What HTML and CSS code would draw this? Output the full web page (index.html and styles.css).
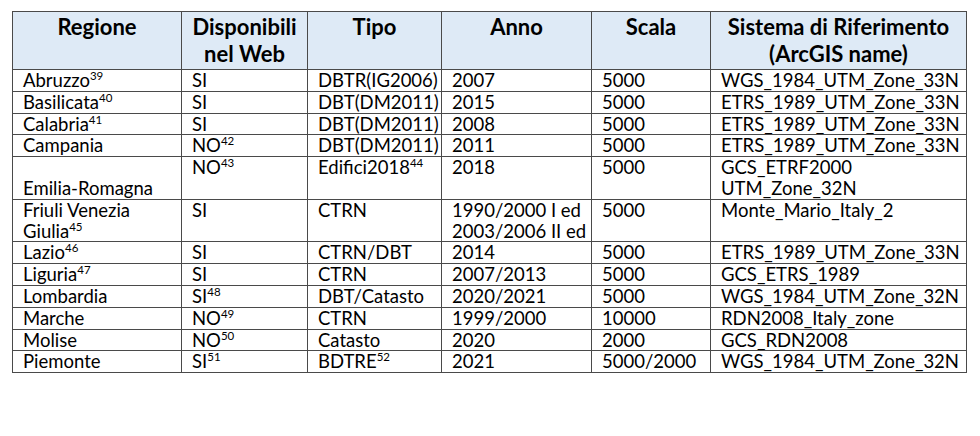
FILE: index.html
```html
<!DOCTYPE html>
<html lang="it">
<head>
<meta charset="utf-8">
<title>Regioni</title>
<link rel="stylesheet" href="styles.css">
</head>
<body>
<table class="grid">
  <colgroup>
    <col class="c-reg">
    <col class="c-disp">
    <col class="c-tipo">
    <col class="c-anno">
    <col class="c-scala">
    <col class="c-sis">
  </colgroup>
  <thead>
    <tr>
      <th>Regione</th>
      <th>Disponibili<br>nel Web</th>
      <th>Tipo</th>
      <th>Anno</th>
      <th>Scala</th>
      <th>Sistema di Riferimento<br>(ArcGIS name)</th>
    </tr>
  </thead>
  <tbody>
    <tr><td>Abruzzo<sup>39</sup></td><td>SI</td><td>DBTR(IG2006)</td><td>2007</td><td>5000</td><td>WGS_1984_UTM_Zone_33N</td></tr>
    <tr><td>Basilicata<sup>40</sup></td><td>SI</td><td>DBT(DM2011)</td><td>2015</td><td>5000</td><td>ETRS_1989_UTM_Zone_33N</td></tr>
    <tr><td>Calabria<sup>41</sup></td><td>SI</td><td>DBT(DM2011)</td><td>2008</td><td>5000</td><td>ETRS_1989_UTM_Zone_33N</td></tr>
    <tr><td>Campania</td><td>NO<sup>42</sup></td><td>DBT(DM2011)</td><td>2011</td><td>5000</td><td>ETRS_1989_UTM_Zone_33N</td></tr>
    <tr><td class="bottom">Emilia-Romagna</td><td>NO<sup>43</sup></td><td>Edifici2018<sup>44</sup></td><td>2018</td><td>5000</td><td>GCS_ETRF2000<br>UTM_Zone_32N</td></tr>
    <tr><td>Friuli Venezia<br>Giulia<sup>45</sup></td><td>SI</td><td>CTRN</td><td>1990/2000 I ed<br>2003/2006 II ed</td><td>5000</td><td>Monte_Mario_Italy_2</td></tr>
    <tr><td>Lazio<sup>46</sup></td><td>SI</td><td>CTRN/DBT</td><td>2014</td><td>5000</td><td>ETRS_1989_UTM_Zone_33N</td></tr>
    <tr><td>Liguria<sup>47</sup></td><td>SI</td><td>CTRN</td><td>2007/2013</td><td>5000</td><td>GCS_ETRS_1989</td></tr>
    <tr><td>Lombardia</td><td>SI<sup>48</sup></td><td>DBT/Catasto</td><td>2020/2021</td><td>5000</td><td>WGS_1984_UTM_Zone_32N</td></tr>
    <tr><td>Marche</td><td>NO<sup>49</sup></td><td>CTRN</td><td>1999/2000</td><td>10000</td><td>RDN2008_Italy_zone</td></tr>
    <tr><td>Molise</td><td>NO<sup>50</sup></td><td>Catasto</td><td>2020</td><td>2000</td><td>GCS_RDN2008</td></tr>
    <tr><td>Piemonte</td><td>SI<sup>51</sup></td><td>BDTRE<sup>52</sup></td><td>2021</td><td>5000/2000</td><td>WGS_1984_UTM_Zone_32N</td></tr>
  </tbody>
</table>
</body>
</html>
```
FILE: styles.css
```css
html, body {
  margin: 0;
  padding: 0;
  background: #ffffff;
}

body {
  font-family: Lato, "Carlito", "Liberation Sans", sans-serif;
  color: #000000;
  font-size: 18.5px;
}

.grid {
  margin: 11px 0 0 12px;
  width: 954px;
  table-layout: fixed;
  border-collapse: collapse;
  border: 1px solid #4a4a4a;
}

.c-reg { width: 169px; }
.c-disp { width: 126px; }
.c-tipo { width: 134px; }
.c-anno { width: 150px; }
.c-scala { width: 119px; }
.c-sis { width: 256px; }

.grid th,
.grid td {
  border: 1px solid #4a4a4a;
  vertical-align: top;
  white-space: nowrap;
  overflow: hidden;
}

.grid th {
  background: #deeaf6;
  font-size: 22px;
  font-weight: 700;
  text-align: center;
  line-height: 27px;
  padding: 1px 2px 2px;
  height: 54px;
}

.grid td {
  text-align: left;
  line-height: 20.8px;
  padding: 0 0 0 10px;
}

.grid td.bottom {
  vertical-align: bottom;
}

.grid sup {
  font-size: 11.5px;
  line-height: 0;
  vertical-align: 7px;
}
```
